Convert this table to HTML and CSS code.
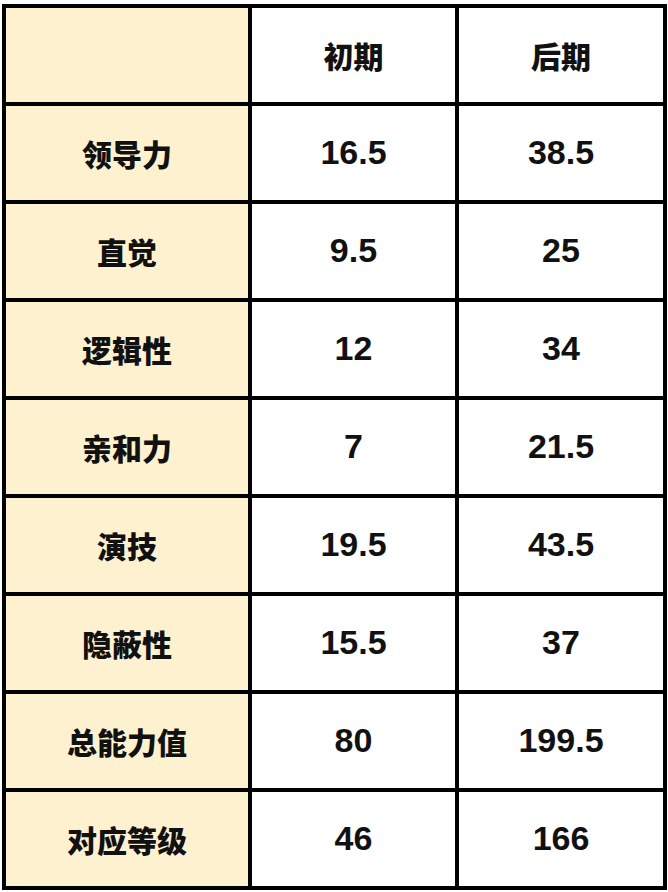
FILE: index.html
```html
<!DOCTYPE html>
<html lang="zh">
<head>
<meta charset="utf-8">
<link rel="stylesheet" href="styles.css">
</head>
<body>
<div class="table">
  <div class="cell label"></div><div class="cell head">初期</div><div class="cell head">后期</div>
  <div class="cell label">领导力</div><div class="cell num">16.5</div><div class="cell num">38.5</div>
  <div class="cell label">直觉</div><div class="cell num">9.5</div><div class="cell num">25</div>
  <div class="cell label">逻辑性</div><div class="cell num">12</div><div class="cell num">34</div>
  <div class="cell label">亲和力</div><div class="cell num">7</div><div class="cell num">21.5</div>
  <div class="cell label">演技</div><div class="cell num">19.5</div><div class="cell num">43.5</div>
  <div class="cell label">隐蔽性</div><div class="cell num">15.5</div><div class="cell num">37</div>
  <div class="cell label">总能力值</div><div class="cell num">80</div><div class="cell num">199.5</div>
  <div class="cell label">对应等级</div><div class="cell num">46</div><div class="cell num">166</div>
</div>
</body>
</html>
```
FILE: styles.css
```css
html, body {
  margin: 0;
  padding: 0;
  background: #ffffff;
}
body {
  padding: 4px 0 0 2px;
}
.table {
  display: grid;
  grid-template-columns: 242px 203px 204px;
  grid-auto-rows: 94px;
  gap: 4px;
  border: 4px solid #000;
  background: #000;
  width: max-content;
}
.cell {
  display: flex;
  align-items: center;
  justify-content: center;
  background: #ffffff;
  color: #111;
  font-weight: 700;
}
.label {
  background: #fdf1cf;
  font-family: "Noto Sans CJK SC", sans-serif;
  font-size: 30px;
  font-weight: 900;
}
.head {
  font-family: "Noto Sans CJK SC", sans-serif;
  font-size: 30px;
  font-weight: 900;
}
.num {
  font-family: "Liberation Sans", Arial, sans-serif;
  font-size: 34px;
  padding-bottom: 2px;
}
```
